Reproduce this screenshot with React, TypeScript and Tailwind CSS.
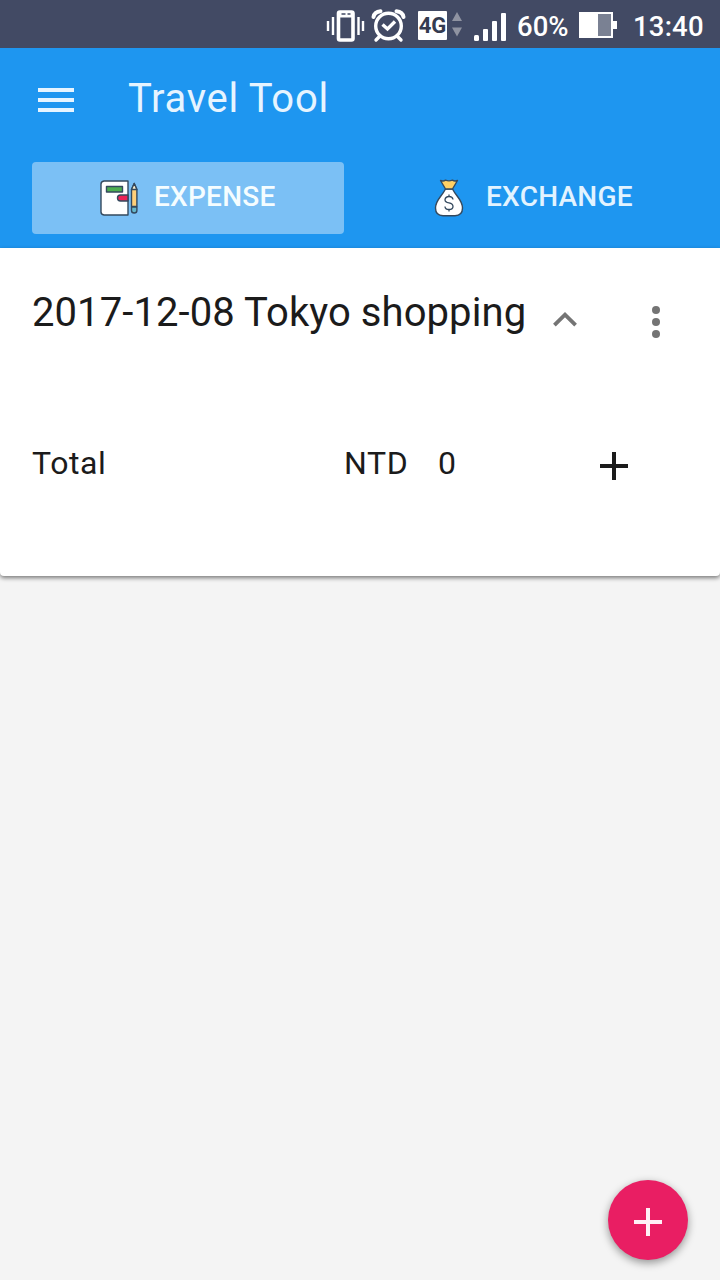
import type { ReactNode } from "react";

function StatusBar() {
  return (
    <div className="flex h-12 w-full items-center bg-[#424a64] pt-1 text-[27.5px] leading-11 font-medium text-white">
      <svg className="ml-[326px] h-11 w-[80px] shrink-0" viewBox="0 4 80 44" fill="none" stroke="#fff">
        <rect x="12.500" y="12" width="14.500" height="28" rx="1.5" strokeWidth="3.6" />
        <path d="M12 14.500h15" strokeWidth="6" />
        <path d="M15.500 14h4M21.500 14h3" stroke="#424a64" strokeWidth="1.600" />
        <path d="M7 17v18M2 21v10M32.500 17v18M37 21v10" strokeWidth="2.4" />
        <circle cx="62.500" cy="26" r="12.800" strokeWidth="3.4" />
        <path d="M56.500 24.500l5 4.500 7.500-7.500" strokeWidth="3.4" />
        <path d="M53.500 36.500l-3.500 3.500M71.500 36.500l3.500 3.500" strokeWidth="3.4" strokeLinecap="round" />
        <path d="M47.500 17c.5-3 3-5.500 7-5.800M77.500 17c-.5-3-3-5.500-7-5.800" strokeWidth="4" strokeLinecap="round" />
      </svg>
      <div className="mt-[-2px] ml-3 flex h-[29px] w-[29px] shrink-0 items-center justify-center rounded-[1px] bg-white text-[22px] leading-[29px] font-bold text-[#343b50]">4G</div>
      <svg className="ml-[4px] h-11 w-[58px] shrink-0" viewBox="451 4 58 44">
        <path d="M457 12l5 9h-10zM457 36.500l5-9h-10z" fill="#8f93a1" />
        <g fill="#fff">
          <rect x="474" y="35" width="5" height="6" rx="1.5" />
          <rect x="483" y="29" width="5" height="12" rx="1" />
          <rect x="492" y="21" width="5" height="20" rx="1" />
          <rect x="501" y="13" width="5" height="28" rx="1" />
        </g>
      </svg>
      <span className="mt-[2px] ml-[8px] w-[61px] shrink-0 whitespace-nowrap">60%</span>
      <svg className="h-11 w-[40px] shrink-0" viewBox="578 4 40 44">
        <path d="M579 12h34v9h4v8h-4v9h-34z" fill="#fff" />
        <path d="M598 14h13v22h-13z" fill="#7a8193" />
      </svg>
      <span className="mt-[2px] ml-[15px] shrink-0 tracking-[0.2px] whitespace-nowrap">13:40</span>
    </div>
  );
}

function LedgerIcon() {
  return (
    <svg className="h-10 w-10 shrink-0" viewBox="0 0 40 40" stroke="#34495e" strokeWidth="1.4" strokeLinejoin="round">
      <path d="M4 3h24v34H4q-3-.5-3-3V6q0-2.500 3-3z" fill="#fff" />
      <path d="M6.500 8.500h16v5.500h-16z" fill="#4caf50" />
      <path d="M28 17h-7.500q-3 0-3 3t3 3H28z" fill="#ec2458" />
      <path d="M31.500 11.500l2.700-6 2.700 6v17h-5.400z" fill="#ffd07a" />
      <path d="M31.500 11.500l2.700-6 2.700 6z" fill="#fff3d0" />
      <path d="M31.500 29h5.400v3.500q0 2.500-2.700 2.500t-2.700-2.500z" fill="#65b8cc" />
    </svg>
  );
}

function MoneyBagIcon() {
  return (
    <svg className="h-10 w-10 shrink-0" viewBox="0 0 40 40" fill="none" stroke="#34495e" strokeWidth="1.400" strokeLinejoin="round">
      <path d="M16.500 11h7q1.500 3 5 7.500Q33.500 25 33.500 30q0 7.500-7.500 7.800H14Q6.500 37.500 6.500 30q0-5 5-11.500Q15 14 16.500 11z" fill="#fff" />
      <path d="M11.500 2.500q3 1 5-.3 3.500 1.300 7 0 2 1.300 5 .3l-5 8.500h-7z" fill="#ffd064" />
      <path d="M24 21.500q-.5-3-4-3t-4 3.200q0 2.500 4 3.200 4 .8 4 3.600 0 3-4 3t-4-3M20 16.500v2M20 31.500v2" strokeWidth="1.300" />
    </svg>
  );
}

function Tab({ icon, label, active = false }: { icon: ReactNode; label: string; active?: boolean }) {
  return (
    <button className={`flex h-[72px] w-[312px] items-center text-[28px] leading-[68px] font-medium tracking-[0.25px] rounded-[4px] ${active ? "gap-[14px] bg-[#7bc0f5] pl-[68px] text-[#f5fdff]" : "gap-[17px] pl-[73px] text-[#e2f3ff]"}`}>
      {icon}
      <span className="mt-[-2px] whitespace-nowrap">{label}</span>
    </button>
  );
}

function Plus() {
  return (
    <svg className="h-7 w-7 shrink-0" viewBox="0 0 28 28" stroke="currentColor" strokeWidth="4">
      <path d="M14 0v28M0 14h28" />
    </svg>
  );
}

export default function App() {
  return (
    <div className="flex h-[1280px] w-[720px] flex-col overflow-hidden bg-[#f4f4f4] font-['Roboto',sans-serif]">
      <StatusBar />
      <header className="h-[200px] shrink-0 bg-[#1e96f0]">
        <div className="flex h-[100px] items-center pl-[38px] text-[#e6f4ff]">
          <svg className="mt-1 h-6 w-9" viewBox="0 0 36 24" stroke="currentColor" strokeWidth="4">
            <path d="M0 2h36M0 12h36M0 22h36" />
          </svg>
          <h1 className="mt-[2px] ml-[54px] text-[40px] leading-[98px] tracking-[0.7px]">Travel Tool</h1>
        </div>
        <nav className="mt-[14px] flex gap-[12px] px-8">
          <Tab icon={<LedgerIcon />} label="EXPENSE" active />
          <Tab icon={<MoneyBagIcon />} label="EXCHANGE" />
        </nav>
      </header>
      <main className="flex grow flex-col">
        <section className="h-[328px] rounded-b-[4px] bg-white text-[#1b1b1b] shadow-[0_2px_4px_rgba(0,0,0,0.5)]">
          <div className="flex h-32 items-center pl-8">
            <h2 className="mt-[2px] w-[521px] whitespace-nowrap text-[40px] leading-[126px] tracking-[0.08px]">2017-12-08 Tokyo shopping</h2>
            <svg className="mt-[14px] h-[15px] w-6" viewBox="0 0 24 15" fill="none" stroke="#747474" strokeWidth="3.800">
              <path d="M1.400 13.200L12 2.700l10.600 10.500" />
            </svg>
            <svg className="mt-[20px] ml-[75px] h-8 w-2" viewBox="0 0 8 32" fill="#747474">
              <circle cx="4" cy="4" r="4" />
              <circle cx="4" cy="16" r="4" />
              <circle cx="4" cy="28" r="4" />
            </svg>
          </div>
          <div className="mt-[55px] flex h-16 items-center pl-8 text-[32px] leading-[64px] tracking-[0.6px]">
            <span className="w-[312px]">Total</span>
            <span className="w-[94px]">NTD</span>
            <span className="w-[162px]">0</span>
            <div className="mt-[6px]"><Plus /></div>
          </div>
        </section>
        <button className="mt-auto mr-8 mb-5 flex h-20 w-20 items-center justify-center self-end rounded-full bg-[#e91e63] pt-1 text-[#fff0f6] shadow-[0_3px_8px_rgba(0,0,0,0.4)]">
          <Plus />
        </button>
      </main>
    </div>
  );
}
